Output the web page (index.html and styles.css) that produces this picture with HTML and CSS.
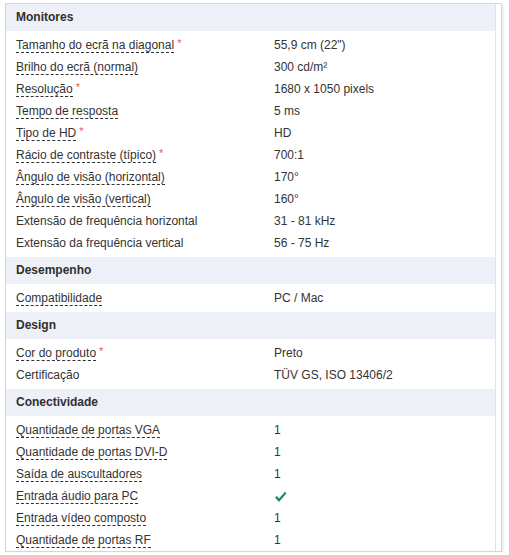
FILE: index.html
```html
<!DOCTYPE html>
<html>
<head>
<meta charset="utf-8">
<link rel="stylesheet" href="styles.css">
</head>
<body>
<div class="card">
  <div class="inner">
    <div class="section">
      <div class="head">Monitores</div>
      <div class="body">
        <div class="row"><span class="label"><span class="tip">Tamanho do ecrã na diagonal</span><span class="req">*</span></span><span class="val">55,9 cm (22")</span></div>
        <div class="row"><span class="label"><span class="tip">Brilho do ecrã (normal)</span></span><span class="val">300 cd/m²</span></div>
        <div class="row"><span class="label"><span class="tip">Resolução</span><span class="req">*</span></span><span class="val">1680 x 1050 pixels</span></div>
        <div class="row"><span class="label"><span class="tip">Tempo de resposta</span></span><span class="val">5 ms</span></div>
        <div class="row"><span class="label"><span class="tip">Tipo de HD</span><span class="req">*</span></span><span class="val">HD</span></div>
        <div class="row"><span class="label"><span class="tip">Rácio de contraste (típico)</span><span class="req">*</span></span><span class="val">700:1</span></div>
        <div class="row"><span class="label"><span class="tip">Ângulo de visão (horizontal)</span></span><span class="val">170°</span></div>
        <div class="row"><span class="label"><span class="tip">Ângulo de visão (vertical)</span></span><span class="val">160°</span></div>
        <div class="row"><span class="label">Extensão de frequência horizontal</span><span class="val">31 - 81 kHz</span></div>
        <div class="row"><span class="label">Extensão da frequência vertical</span><span class="val">56 - 75 Hz</span></div>
      </div>
    </div>
    <div class="section">
      <div class="head">Desempenho</div>
      <div class="body">
        <div class="row"><span class="label"><span class="tip">Compatibilidade</span></span><span class="val">PC / Mac</span></div>
      </div>
    </div>
    <div class="section">
      <div class="head">Design</div>
      <div class="body">
        <div class="row"><span class="label"><span class="tip">Cor do produto</span><span class="req">*</span></span><span class="val">Preto</span></div>
        <div class="row"><span class="label">Certificação</span><span class="val">TÜV GS, ISO 13406/2</span></div>
      </div>
    </div>
    <div class="section last">
      <div class="head">Conectividade</div>
      <div class="body">
        <div class="row"><span class="label"><span class="tip">Quantidade de portas VGA</span></span><span class="val">1</span></div>
        <div class="row"><span class="label"><span class="tip">Quantidade de portas DVI-D</span></span><span class="val">1</span></div>
        <div class="row"><span class="label"><span class="tip">Saída de auscultadores</span></span><span class="val">1</span></div>
        <div class="row"><span class="label"><span class="tip">Entrada áudio para PC</span></span><span class="val"><svg class="check" width="13" height="12" viewBox="0 0 13 12"><path d="M1 6.5 L3 5 L5 7.5 L11 0.8 L12.5 2.2 L5 11 Z" fill="#1d8a64"/></svg></span></div>
        <div class="row"><span class="label"><span class="tip">Entrada vídeo composto</span></span><span class="val">1</span></div>
        <div class="row"><span class="label"><span class="tip">Quantidade de portas RF</span></span><span class="val">1</span></div>
      </div>
    </div>
  </div>
</div>
</body>
</html>
```
FILE: styles.css
```css
html, body {
  margin: 0;
  padding: 0;
  background: #fff;
}
body {
  font-family: "Liberation Sans", Arial, sans-serif;
  font-size: 12px;
  color: #333;
}
.card {
  margin: 3px 0 0 5px;
  width: 497px;
  border: 1px solid #d6d6d6;
  box-sizing: border-box;
  box-shadow: 1px 2px 2px rgba(0,0,0,0.12);
}
.inner {
  margin-right: 5px;
  border-right: 1px solid #e2e2e2;
}
.head {
  height: 27px;
  line-height: 27px;
  background: #eef0f8;
  font-weight: bold;
  padding-left: 10px;
  color: #2f2f2f;
}
.body {
  padding: 3px 0;
}
.last .body {
  padding-bottom: 0;
}
.row {
  display: flex;
  height: 22px;
  align-items: center;
}
.label {
  width: 258px;
  padding-left: 10px;
  flex: none;
}
.tip {
  border-bottom: 1px dashed #333;
  line-height: 14px;
  display: inline-block;
}
.req {
  color: #e06060;
  font-size: 11px;
  margin-left: 3px;
  vertical-align: top;
  position: relative;
  top: -1px;
}
.val {
  flex: 1;
}
.check {
  display: block;
  margin-top: 1px;
}
```
